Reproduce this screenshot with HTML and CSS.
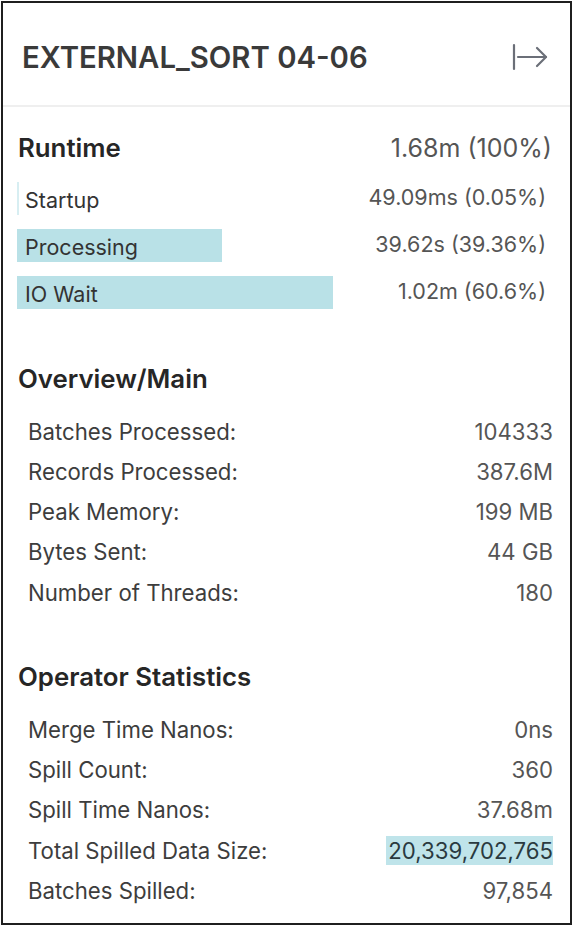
FILE: index.html
```html
<!DOCTYPE html>
<html>
<head>
<meta charset="utf-8">
<link rel="stylesheet" href="styles.css">
</head>
<body>
<div class="card">
  <div class="header">
    <h1 class="title">EXTERNAL_SORT 04-06</h1>
    <svg class="exit-icon" width="38" height="28" viewBox="0 0 38 28" fill="none" stroke="#6b6f78" stroke-width="2.2" stroke-linecap="round" stroke-linejoin="round">
      <path d="M3 2 V26"/>
      <path d="M7 14 H35"/>
      <path d="M26 5 L35 14 L26 23"/>
    </svg>
  </div>

  <section class="runtime">
    <div class="runtime-head">
      <span class="section-title">Runtime</span>
      <span class="runtime-total">1.68m (100%)</span>
    </div>
    <div class="bar-row">
      <div class="bar-track"><div class="bar bar-min" style="width:0.05%"></div></div>
      <span class="bar-label">Startup</span>
      <span class="bar-value">49.09ms (0.05%)</span>
    </div>
    <div class="bar-row">
      <div class="bar-track"><div class="bar" style="width:39.36%"></div></div>
      <span class="bar-label">Processing</span>
      <span class="bar-value">39.62s (39.36%)</span>
    </div>
    <div class="bar-row">
      <div class="bar-track"><div class="bar" style="width:60.6%"></div></div>
      <span class="bar-label">IO Wait</span>
      <span class="bar-value">1.02m (60.6%)</span>
    </div>
  </section>

  <section class="stats stats-overview">
    <h2 class="section-title">Overview/Main</h2>
    <div class="stat"><span class="stat-label">Batches Processed:</span><span class="stat-value">104333</span></div>
    <div class="stat"><span class="stat-label">Records Processed:</span><span class="stat-value">387.6M</span></div>
    <div class="stat"><span class="stat-label">Peak Memory:</span><span class="stat-value">199 MB</span></div>
    <div class="stat"><span class="stat-label">Bytes Sent:</span><span class="stat-value">44 GB</span></div>
    <div class="stat"><span class="stat-label">Number of Threads:</span><span class="stat-value">180</span></div>
  </section>

  <section class="stats stats-operator">
    <h2 class="section-title">Operator Statistics</h2>
    <div class="stat"><span class="stat-label">Merge Time Nanos:</span><span class="stat-value">0ns</span></div>
    <div class="stat"><span class="stat-label">Spill Count:</span><span class="stat-value">360</span></div>
    <div class="stat"><span class="stat-label">Spill Time Nanos:</span><span class="stat-value">37.68m</span></div>
    <div class="stat"><span class="stat-label">Total Spilled Data Size:</span><span class="stat-value highlight">20,339,702,765</span></div>
    <div class="stat"><span class="stat-label">Batches Spilled:</span><span class="stat-value">97,854</span></div>
  </section>
</div>
</body>
</html>
```

FILE: styles.css
```css
* { box-sizing: border-box; }

html, body {
  margin: 0;
  padding: 0;
  background: #ffffff;
}

body {
  font-family: Inter, "Noto Sans", "Liberation Sans", sans-serif;
  color: #333;
}

.card {
  margin: 1px 0 0 1px;
  width: 571px;
  height: 924px;
  border: 2px solid #1f1f1f;
  background: #fff;
  overflow: hidden;
}

.header {
  height: 104px;
  display: flex;
  align-items: center;
  justify-content: space-between;
  padding: 6px 21px 0 19px;
  border-bottom: 2px solid #efefef;
}

.title {
  margin: 0;
  font-size: 29.3px;
  font-weight: 600;
  color: #3a3a3a;
}

.exit-icon {
  display: block;
}

.runtime {
  padding: 24px 24px 14px 14px;
}

.runtime-head {
  height: 33px;
  display: flex;
  align-items: center;
  justify-content: space-between;
  margin-bottom: 18px;
  padding-left: 1px;
  margin-right: -6px;
}

.section-title {
  margin: 0;
  font-size: 25.8px;
  font-weight: 600;
  color: #262626;
}

.runtime-total {
  font-size: 25px;
  color: #555;
}

.bar-row {
  display: grid;
  grid-template-columns: 1fr auto;
  height: 33px;
  margin-bottom: 14px;
}

.bar-row:last-child {
  margin-bottom: 0;
}

.bar-track {
  grid-area: 1 / 1 / 2 / 3;
  margin-right: 7px;
  height: 100%;
}

.bar {
  height: 100%;
  background: #b9e1e7;
}

.bar-min {
  min-width: 2px;
  background: #d7eef2;
}

.bar-label {
  grid-area: 1 / 1 / 2 / 2;
  align-self: center;
  padding-left: 8px;
  font-size: 21.5px;
  color: #333;
  margin-top: 2px;
}

.bar-value {
  grid-area: 1 / 2 / 2 / 3;
  align-self: center;
  font-size: 21.5px;
  color: #555;
  margin-top: -4px;
}

.stats {
  padding: 0 17px 0 15px;
}

.stats-overview {
  margin-top: 39px;
}

.stats-operator {
  margin-top: 48px;
}

.stats .section-title {
  height: 33px;
  line-height: 33px;
  margin-bottom: 16px;
}

.stat {
  height: 40.25px;
  display: flex;
  align-items: center;
  justify-content: space-between;
  padding-left: 10px;
  font-size: 22.2px;
}

.stat-label {
  color: #3d3d3d;
}

.stat-value {
  color: #555;
}

.stat-value.highlight {
  background: #bfe4ea;
  color: #2a3a3f;
  padding: 1px 0 1px 2px;
}
```
